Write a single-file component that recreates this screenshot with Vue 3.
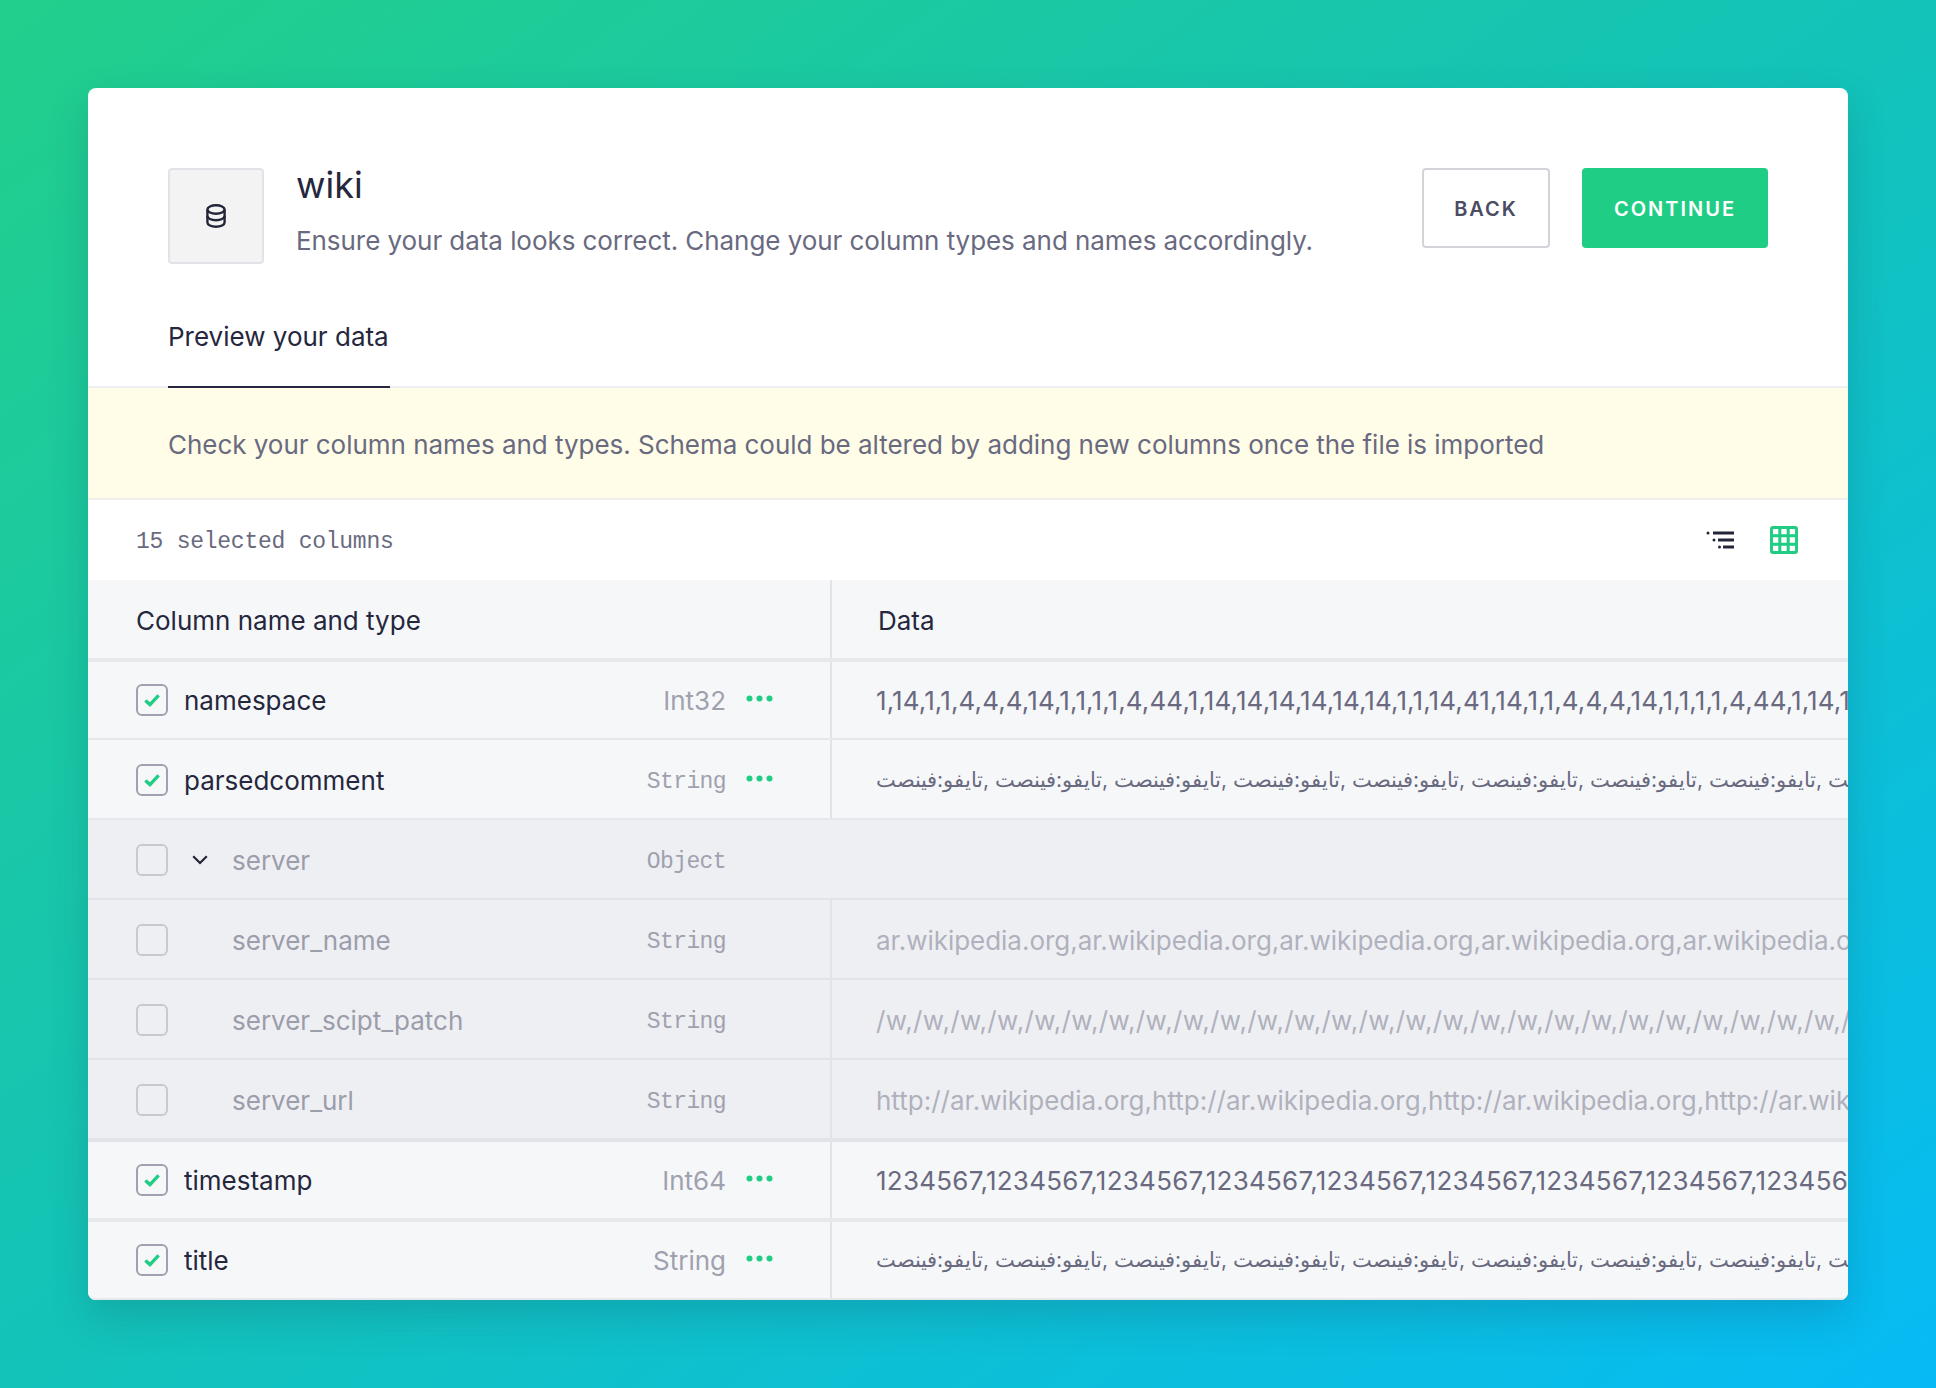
<script setup>
const ar = Array(15).fill('تايفو:فينصت').join(' ,')
const rows = [
  { name: 'namespace', type: 'Int32', data: '1,14,1,1,4,4,4,14,1,1,1,1,4,44,1,14,14,14,14,14,14,1,1,14,41,14,1,1,4,4,4,14,1,1,1,1,4,44,1,14,14,14,14', ls: '0.12px', checked: true, cls: 'first' },
  { name: 'parsedcomment', type: 'String', mono: true, data: ar, arabic: true, checked: true, cls: 'std' },
  { name: 'server', type: 'Object', mono: true, data: null, parent: true, cls: 'std group noline' },
  { name: 'server_name', type: 'String', mono: true, data: 'ar.wikipedia.org,'.repeat(10), ls: '-0.03px', child: true, cls: 'std group' },
  { name: 'server_scipt_patch', type: 'String', mono: true, data: '/w,'.repeat(60), ls: '0.3px', child: true, cls: 'std group' },
  { name: 'server_url', type: 'String', mono: true, data: 'http://ar.wikipedia.org,'.repeat(8), child: true, cls: 'std group endgroup' },
  { name: 'timestamp', type: 'Int64', data: '1234567,'.repeat(16), ls: '0.25px', checked: true, cls: 'stamp' },
  { name: 'title', type: 'String', data: ar, arabic: true, checked: true, cls: 'last' },
]
</script>

<template>
  <main class="page">
    <section class="card">
      <header class="head">
        <div class="icon-box">
          <svg width="20" height="24" viewBox="0 0 20 24" fill="none" stroke="#232539" stroke-width="2.4">
            <ellipse cx="10" cy="5.5" rx="8.6" ry="4.3" />
            <path d="M1.4 5.5v13c0 2.4 3.8 4.3 8.6 4.3s8.6-1.9 8.6-4.3v-13" />
            <path d="M1.4 12c0 2.4 3.8 4.3 8.6 4.3s8.6-1.9 8.6-4.3" />
          </svg>
        </div>
        <div class="titles">
          <h1>wiki</h1>
          <p>Ensure your data looks correct. Change your column types and names accordingly.</p>
        </div>
        <button class="btn back">BACK</button>
        <button class="btn next">CONTINUE</button>
      </header>

      <nav class="tabs"><span class="tab">Preview your data</span></nav>

      <div class="banner">Check your column names and types. Schema could be altered by adding new columns once the file is imported</div>

      <div class="toolbar">
        <span class="count">15 selected columns</span>
        <svg class="ic-list" width="28" height="20" viewBox="0 0 28 20" fill="#232539">
          <circle cx="2" cy="3" r="1.5" /><rect x="7" y="1.5" width="21" height="3" />
          <circle cx="8" cy="10" r="1.5" /><rect x="12" y="8.5" width="16" height="3" />
          <circle cx="13.5" cy="17" r="1.5" /><rect x="17" y="15.5" width="11" height="3" />
        </svg>
        <svg width="28" height="28" viewBox="0 0 28 28" fill="none" stroke="#20cd85" stroke-width="3">
          <rect x="1.5" y="1.5" width="25" height="25" rx="1.5" />
          <path d="M1 9.8h26M1 18.2h26M9.8 1v26M18.2 1v26" />
        </svg>
      </div>

      <div class="row table-head">
        <div class="left">Column name and type</div>
        <div class="right head-data">Data</div>
      </div>

      <div v-for="r in rows" :key="r.name" class="row" :class="r.cls">
        <div class="left">
          <span class="check" :class="{ on: r.checked }">
            <svg v-if="r.checked" width="16" height="14" viewBox="0 0 16 14" fill="none" stroke="#20cd85" stroke-width="3.4">
              <path d="M1.4 7.4l4.6 4.2L14.6 2.4" />
            </svg>
          </span>
          <span v-if="r.parent" class="chev">
            <svg width="16" height="10" viewBox="0 0 16 10" fill="none" stroke="#232539" stroke-width="2.2"><path d="M1.2 1.2L8 8l6.8-6.8" /></svg>
          </span>
          <span v-if="r.child" class="chev-space"></span>
          <span class="name">{{ r.name }}</span>
          <span class="type" :class="{ mono: r.mono }">{{ r.type }}</span>
          <span class="dots-slot">
            <svg v-if="r.checked" width="27" height="7" viewBox="0 0 27 7" fill="#20cd85">
              <circle cx="3.5" cy="3.5" r="3" /><circle cx="13.5" cy="3.5" r="3" /><circle cx="23.5" cy="3.5" r="3" />
            </svg>
          </span>
        </div>
        <div class="right">
          <span v-if="r.data" class="data" :class="{ arabic: r.arabic }" :style="{ letterSpacing: r.ls }">{{ r.data }}</span>
        </div>
      </div>
    </section>
  </main>
</template>

<style>
html, body { margin: 0; }
</style>

<style scoped>
.page {
  box-sizing: border-box;
  height: 1388px;
  padding: 88px;
  background: linear-gradient(to bottom right, #22cf8b 0%, #13c3b9 50%, #06bbf5 100%);
  font-family: Inter, "Liberation Sans", sans-serif;
  color: #25273d;
}
.card {
  height: 1212px;
  border-radius: 8px;
  overflow: hidden;
  background: #fff;
  box-shadow: 0 16px 40px rgba(20, 60, 80, 0.2);
}
.head {
  display: flex;
  align-items: flex-start;
  padding: 80px 80px 0;
}
.icon-box {
  box-sizing: border-box;
  width: 96px;
  height: 96px;
  flex: none;
  display: flex;
  align-items: center;
  justify-content: center;
  background: #f3f3f4;
  border: 2px solid #e2e2e8;
  border-radius: 4px;
}
.titles { flex: 1; margin-left: 32px; }
h1 {
  margin: -6px 0 0;
  font-size: 36px;
  line-height: 46px;
  font-weight: 400;
}
p {
  margin: 13px 0 0;
  font-size: 26px;
  line-height: 40px;
  letter-spacing: -0.06px;
  color: #696a80;
}
.btn {
  box-sizing: border-box;
  height: 80px;
  border-radius: 4px;
  font-family: inherit;
  font-size: 20px;
  font-weight: 600;
  letter-spacing: 2px;
  padding: 2px 0 0;
}
.back {
  width: 128px;
  margin-right: 32px;
  background: #fff;
  border: 2px solid #d3d3da;
  color: #4a4c62;
}
.next {
  width: 186px;
  background: #20cd85;
  border: 0;
  color: #fff;
}
.tabs {
  box-sizing: border-box;
  height: 124px;
  padding: 0 80px;
  display: flex;
  border-bottom: 2px solid #eeeff3;
}
.tab {
  box-sizing: border-box;
  width: 222px;
  height: 124px;
  padding-top: 53px;
  font-size: 26px;
  line-height: 40px;
  border-bottom: 2px solid #25273d;
  white-space: nowrap;
}
.banner {
  box-sizing: border-box;
  height: 112px;
  padding: 2px 80px 0;
  display: flex;
  align-items: center;
  background: #fffce8;
  border-bottom: 2px solid #efefe9;
  font-size: 26px;
  letter-spacing: -0.03px;
  color: #696a80;
}
.toolbar {
  height: 80px;
  display: flex;
  align-items: center;
  padding: 0 50px 0 48px;
}
.count {
  flex: 1;
  padding-top: 3px;
  font-family: "Liberation Mono", "DejaVu Sans Mono", monospace;
  font-size: 23px;
  letter-spacing: -0.25px;
  color: #696a80;
}
.ic-list { margin-right: 36px; }
.row {
  box-sizing: border-box;
  display: grid;
  grid-template-columns: 744px 1fr;
  height: 80px;
  background: #f6f7f9;
  border-bottom: 2px solid #e7e8eb;
}
.left {
  box-sizing: border-box;
  display: flex;
  align-items: center;
  padding: 0 57px 0 48px;
  border-right: 2px solid #e2e3e7;
  font-size: 26px;
  min-width: 0;
}
.right {
  display: flex;
  align-items: center;
  min-width: 0;
  overflow: hidden;
  padding-left: 44px;
}
.table-head { height: 82px; border-bottom-width: 4px; }
.table-head > .left, .table-head > .right { padding-top: 2px; }
.head-data { padding-left: 46px; font-size: 26px; }
.first { height: 78px; }
.std > .left, .std > .right { padding-top: 2px; }
.group { background: #eeeff3; border-bottom-color: #e2e3e8; }
.noline > .left { border-right-color: transparent; }
.endgroup { height: 82px; border-bottom-width: 4px; }
.stamp { border-bottom-width: 4px; }
.last { height: 78px; }
.check {
  box-sizing: border-box;
  width: 32px;
  height: 32px;
  flex: none;
  display: flex;
  align-items: center;
  justify-content: center;
  margin-right: 16px;
  border: 2px solid #c8c8d0;
  border-radius: 6px;
}
.check.on { border-color: #a0a1ae; }
.chev { width: 48px; flex: none; display: flex; padding-left: 8px; box-sizing: border-box; }
.chev-space { width: 48px; flex: none; }
.name { flex: 1; }
.group .name { color: #9c9dab; }
.type { color: #a0a1ae; }
.mono {
  padding-top: 4px;
  font-family: "Liberation Mono", "DejaVu Sans Mono", monospace;
  font-size: 23px;
  letter-spacing: -0.6px;
}
.dots-slot { width: 47px; flex: none; display: flex; justify-content: flex-end; margin-top: -4px; }
.data {
  white-space: nowrap;
  font-size: 26px;
  color: #696a80;
}
.group .data { color: #b0b1bd; }
.arabic { font-size: 21px; margin-top: -2px; }
</style>
